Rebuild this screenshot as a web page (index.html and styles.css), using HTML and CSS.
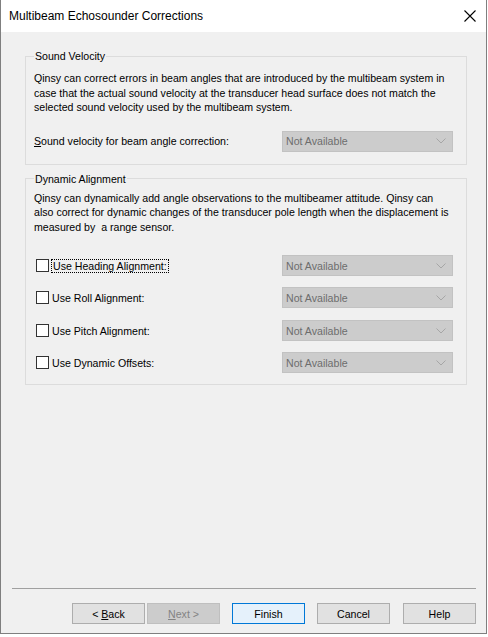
FILE: index.html
```html
<!DOCTYPE html>
<html lang="en">
<head>
    <meta charset="UTF-8">
    <title>Multibeam Echosounder Corrections</title>
    <link rel="stylesheet" href="styles.css">
</head>
<body>
    <div class="window">
        <div class="titlebar">
            <span class="title">Multibeam Echosounder Corrections</span>
            <svg class="close" width="12" height="12" viewBox="0 0 12 12">
                <path d="M0.5 0.5 L11.5 11.5 M11.5 0.5 L0.5 11.5" stroke="#000" stroke-width="1.1"/>
            </svg>
        </div>
        <div class="content">
            <fieldset class="group group-sound">
                <legend>Sound Velocity</legend>
                <p class="info">Qinsy can correct errors in beam angles that are introduced by the multibeam system in<br>case that the actual sound velocity at the transducer head surface does not match the<br>selected sound velocity used by the multibeam system.</p>
                <div class="row">
                    <span class="label"><u>S</u>ound velocity for beam angle correction:</span>
                    <div class="combo"><span>Not Available</span><svg width="10" height="6" viewBox="0 0 10 6"><path d="M0.5 0.5 L5 5 L9.5 0.5" fill="none" stroke="#a6a6a6"/></svg></div>
                </div>
            </fieldset>
            <fieldset class="group group-dynamic">
                <legend>Dynamic Alignment</legend>
                <p class="info">Qinsy can dynamically add angle observations to the multibeamer attitude. Qinsy can<br>also correct for dynamic changes of the transducer pole length when the displacement is<br>measured by &nbsp;a range sensor.</p>
                <div class="checks">
                    <div class="row">
                        <label class="check"><span class="box"></span><span class="focus">Use Heading Alignment:</span></label>
                        <div class="combo"><span>Not Available</span><svg width="10" height="6" viewBox="0 0 10 6"><path d="M0.5 0.5 L5 5 L9.5 0.5" fill="none" stroke="#a6a6a6"/></svg></div>
                    </div>
                    <div class="row">
                        <label class="check"><span class="box"></span><span>Use Roll Alignment:</span></label>
                        <div class="combo"><span>Not Available</span><svg width="10" height="6" viewBox="0 0 10 6"><path d="M0.5 0.5 L5 5 L9.5 0.5" fill="none" stroke="#a6a6a6"/></svg></div>
                    </div>
                    <div class="row">
                        <label class="check"><span class="box"></span><span>Use Pitch Alignment:</span></label>
                        <div class="combo"><span>Not Available</span><svg width="10" height="6" viewBox="0 0 10 6"><path d="M0.5 0.5 L5 5 L9.5 0.5" fill="none" stroke="#a6a6a6"/></svg></div>
                    </div>
                    <div class="row">
                        <label class="check"><span class="box"></span><span>Use Dynamic Offsets:</span></label>
                        <div class="combo"><span>Not Available</span><svg width="10" height="6" viewBox="0 0 10 6"><path d="M0.5 0.5 L5 5 L9.5 0.5" fill="none" stroke="#a6a6a6"/></svg></div>
                    </div>
                </div>
            </fieldset>
        </div>
        <div class="footer">
            <hr class="separator">
            <div class="buttons">
                <button class="btn">&lt; <u>B</u>ack</button>
                <button class="btn disabled"><u>N</u>ext &gt;</button>
                <button class="btn default">Finish</button>
                <button class="btn">Cancel</button>
                <button class="btn help">Help</button>
            </div>
        </div>
    </div>
</body>
</html>
```

FILE: styles.css
```css
body {
    margin: 0;
    background: #ffffff;
    font-family: 'Liberation Sans', Arial, sans-serif;
    font-size: 10.6px;
    color: #000;
}
.window {
    width: 487px;
    height: 634px;
    box-sizing: border-box;
    border: 1px solid #7f7f7f;
    border-top: none;
    background: #f0f0f0;
    display: flex;
    flex-direction: column;
}
.titlebar {
    height: 31px;
    background: #ffffff;
    display: flex;
    align-items: center;
    justify-content: space-between;
    padding: 0 9px 1px 8px;
    flex-shrink: 0;
}
.title {
    font-size: 12px;
}
.close {
    margin-right: 1px;
}
.content {
    flex: 1;
    padding: 17px 0 0 24px;
}
.group {
    width: 442px;
    min-width: 0;
    box-sizing: border-box;
    margin: 0 0 7px 0;
    border: 1px solid #dcdcdc;
    padding: 0 13px 0 8px;
}
legend {
    padding: 0 1px;
    margin-left: 0;
    line-height: 14px;
}
.info {
    margin: 8px 0 0 0;
    line-height: 14.5px;
    white-space: nowrap;
}
.group-dynamic .info {
    margin-top: 5px;
}
.row {
    display: flex;
    align-items: center;
    justify-content: space-between;
}
.group-sound .row {
    margin-top: 16px;
    margin-bottom: 12px;
}
.group-dynamic {
    height: 213px;
}
.checks {
    margin-top: 21px;
    display: flex;
    flex-direction: column;
    gap: 11px;
}
.checks .row:nth-child(3) {
    margin-top: 1px;
}
.combo {
    width: 171px;
    height: 21px;
    box-sizing: border-box;
    background: #cccccc;
    border: 1px solid #c2c2c2;
    color: #6d6d6d;
    display: flex;
    align-items: center;
    justify-content: space-between;
    padding: 0 6px 0 3px;
}
.check {
    display: flex;
    align-items: center;
    gap: 3px;
    margin-left: 2px;
}
.box {
    width: 13px;
    height: 13px;
    box-sizing: border-box;
    background: #fff;
    border: 1px solid #333;
}
.focus {
    outline: 1px dotted #000;
    outline-offset: 0;
    padding: 0 1px;
}
.footer {
    padding: 0 10px 9px 11px;
}
.separator {
    margin: 0 0 14px 0;
    border: none;
    border-top: 1px solid #a0a0a0;
}
.buttons {
    display: flex;
    justify-content: flex-end;
}
.btn {
    width: 73px;
    height: 21px;
    font-family: inherit;
    font-size: 10.6px;
    background: #e1e1e1;
    border: 1px solid #adadad;
    color: #000;
    padding: 0;
    margin-left: 12px;
}
.btn:first-child {
    margin-left: 0;
}
.btn.disabled {
    margin-left: 2px;
    background: #cccccc;
    border-color: #bfbfbf;
    color: #838383;
}
.btn.default {
    background: #e5f1fb;
    border-color: #0078d7;
}
.btn.help {
    margin-left: 13px;
}
```
